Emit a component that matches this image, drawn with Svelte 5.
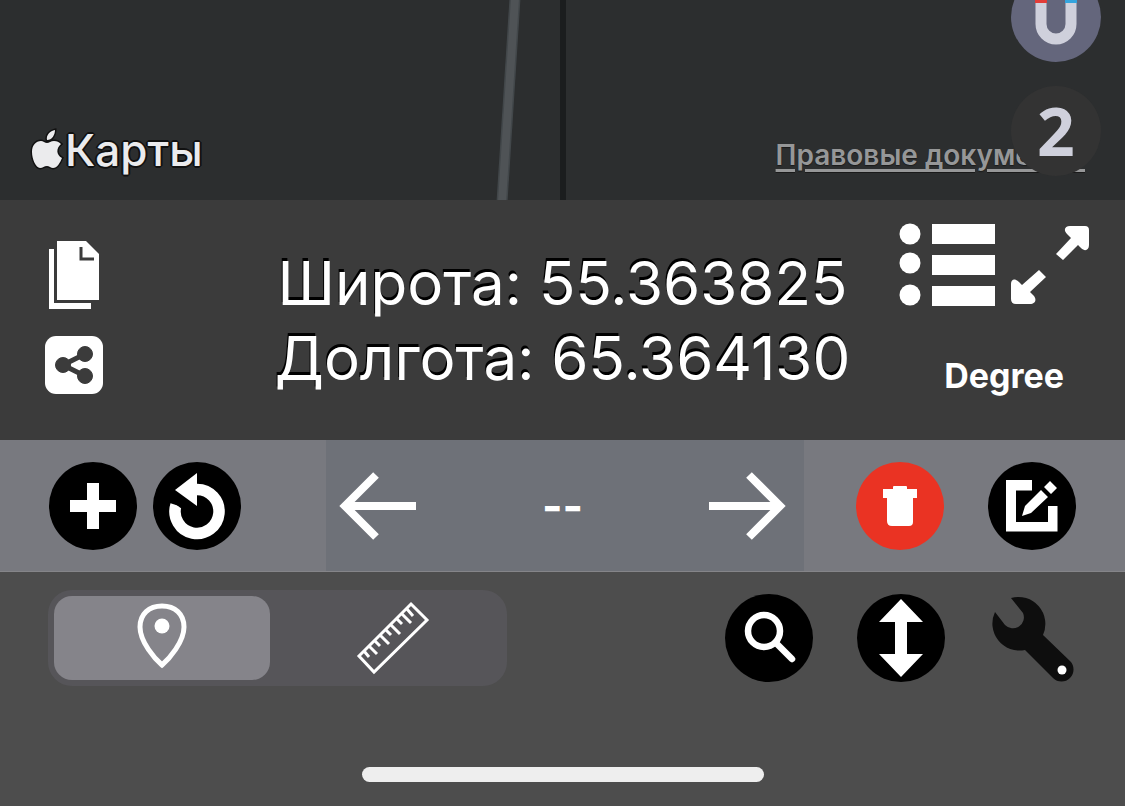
<script>
  let latitude = $state( 55.363825 );
  let longitude = $state( 65.36413 );
  let mode = $state( 'point' );
  let selected = $state( null );

  let label = $derived( selected === null ? '--' : selected );
</script>

<main>
  <section class="map">
    <svg class="roads" viewBox="0 0 1125 200" preserveAspectRatio="xMidYMax slice" aria-hidden="true">
      <path d="M515 -2 L502 202" stroke="#42474a" stroke-width="11" />
      <path d="M515 -2 L502 202" stroke="#4f5356" stroke-width="8" />
      <path d="M563 0 V200" stroke="#1b1d1e" stroke-width="6" />
    </svg>
    <p class="brand">
      <svg width="33" height="42" viewBox="0 0 33 42" aria-hidden="true">
        <path d="M17 11 C16 6 20 2 25 1 C25 6 22 11 17 11 Z M2 23 C2 16 6 12 11 12 C13 12 15 14 17 14 C19 14 21 12 24 12 C27 12 29 13 31 15 C26 19 26 26 32 29 C30 34 27 39 23 39 C21 39 19 37 17 37 C14 37 13 39 10 39 C6 39 2 30 2 23 Z" />
      </svg>
      <span>Карты</span>
    </p>
    <a class="legal" href="#legal">Правовые документы</a>
    <div class="floating">
      <button aria-label="Magnet">
        <svg width="90" height="90" viewBox="0 0 90 90">
          <path d="M30 24 V52 a15 15 0 0 0 30 0 V24" fill="none" stroke="#cfd0dc" stroke-width="11" />
          <path d="M24 18 h12 v13 h-12 z" fill="#e23c38" />
          <path d="M54 18 h12 v13 h-12 z" fill="#35a4dd" />
        </svg>
      </button>
      <button class="count">2</button>
    </div>
  </section>

  <section class="position">
    <div class="share">
      <button aria-label="Copy">
        <svg width="60" height="70" viewBox="0 0 60 70" fill="#fff">
          <path d="M5 9 h5 v54 h37 v6 h-42 z" />
          <path d="M13 1 h29 l13 13 v46 h-42 z" />
          <path d="M37 7 v12 h13" fill="none" stroke="#3b3b3b" stroke-width="3" />
        </svg>
      </button>
      <button aria-label="Share">
        <svg width="60" height="60" viewBox="0 0 60 60">
          <rect x="1" y="1" width="58" height="58" rx="11" fill="#fff" />
          <g fill="#3b3b3b" stroke="#3b3b3b">
            <path d="M41 19 L19 30 L41 41" fill="none" stroke-width="5" />
            <circle cx="41" cy="19" r="7.5" />
            <circle cx="19" cy="30" r="7.5" />
            <circle cx="41" cy="41" r="7.5" />
          </g>
        </svg>
      </button>
    </div>
    <div class="coordinates">
      <p>Широта: {latitude.toFixed( 6 )}</p>
      <p>Долгота: {longitude.toFixed( 6 )}</p>
    </div>
    <div class="format">
      <div class="icons">
        <button aria-label="List">
          <svg width="98" height="84" viewBox="0 0 98 84" fill="#fff">
            <circle cx="12" cy="12" r="10.5" />
            <circle cx="12" cy="41" r="10.5" />
            <circle cx="12" cy="73" r="10.5" />
            <path d="M34 2 h63 v20 h-63 z M34 33 h63 v20 h-63 z M34 64 h63 v20 h-63 z" />
          </svg>
        </button>
        <button aria-label="Expand">
          <svg width="80" height="80" viewBox="0 0 80 80" fill="#fff">
            <path d="M46 30 L61 14 L57 10 C53 6 55 2 60 2 H75 Q79 2 79 6 V21 C79 26 75 28 71 24 L68 21 L53 36 Z" />
            <path d="M29 46 L36 53 L20 68 L24 72 C27 76 25 80 20 80 H6 Q1 80 1 75 V60 C1 55 5 54 9 58 L12 61 Z" />
          </svg>
        </button>
      </div>
      <button class="unit">Degree</button>
    </div>
  </section>

  <section class="points">
    <div class="group left">
      <button class="round" aria-label="Add">
        <svg width="88" height="88" viewBox="0 0 88 88" fill="#fff">
          <path d="M38 21 h12 v17 h17 v12 h-17 v17 h-12 v-17 h-17 v-12 h17 z" />
        </svg>
      </button>
      <button class="round" aria-label="Undo">
        <svg width="88" height="88" viewBox="0 0 88 88">
          <path d="M44 27.500 A22 22 0 1 1 23 43" fill="none" stroke="#fff" stroke-width="11.500" />
          <path d="M44 11 V44 L22 28 Z" fill="#fff" />
          <path d="M17 38 L29 47 L31 43 L19 32 Z" fill="#000" />
        </svg>
      </button>
    </div>
    <div class="pager">
      <button aria-label="Previous">
        <svg width="78" height="68" viewBox="0 0 78 68" fill="none" stroke="#fff" stroke-width="8">
          <path d="M77 34 H7 M37 3 L6 34 L37 65" />
        </svg>
      </button>
      <output>{label}</output>
      <button aria-label="Next">
        <svg width="78" height="68" viewBox="0 0 78 68" fill="none" stroke="#fff" stroke-width="8">
          <path d="M1 34 H71 M41 3 L72 34 L41 65" />
        </svg>
      </button>
    </div>
    <div class="group right">
      <button class="round delete" aria-label="Delete">
        <svg width="88" height="88" viewBox="0 0 88 88" fill="#fff">
          <path d="M27 27 h10 v-2 q0 -1 1 -1 h12 q1 0 1 1 v2 h10 v9 h-4 v24 q0 4 -4 4 h-17 q-5 0 -5 -5 v-23 h-4 z" />
        </svg>
      </button>
      <button class="round" aria-label="Edit">
        <svg width="88" height="88" viewBox="0 0 88 88" fill="#fff">
          <path d="M44 18 V28.500 H28 V60 H60 V44 H69.500 V69.500 H18 V18 Z" />
          <path d="M56 25 L62 19 L69 26 L63 32 Z M53 28 L60 35 L43 51 L34 54 L37 44 Z" />
        </svg>
      </button>
    </div>
  </section>

  <footer>
    <div class="tools">
      <div class="segmented" role="radiogroup" aria-label="Mode">
        <label class:active={mode === 'point'}>
          <input type="radio" name="mode" value="point" aria-label="Point" bind:group={mode} />
          <svg width="72" height="84" viewBox="0 0 72 84">
            <path d="M36 69 C29 63 14 46 14 31 C14 18 23 10 36 10 C49 10 58 18 58 31 C58 46 43 63 36 69 Z" fill="none" stroke="#fff" stroke-width="5" />
            <circle cx="36" cy="30" r="7.500" fill="#fff" />
          </svg>
        </label>
        <label class:active={mode === 'ruler'}>
          <input type="radio" name="mode" value="ruler" aria-label="Ruler" bind:group={mode} />
          <svg width="76" height="84" viewBox="0 0 76 84" fill="none" stroke="#fff">
            <path d="M56 8 L72 24 L19 76 L4 60 Z" stroke-width="3" />
            <path d="M9 55 l5 6 M14 50 l8 8 M20 45 l5 5 M25 39 l9 9 M31 34 l5 5 M36 29 l9 9 M42 23 l5 5 M47 18 l9 9 M52 13 l6 7" stroke-width="3" />
          </svg>
        </label>
      </div>
      <div class="actions">
        <button class="round" aria-label="Search">
          <svg width="88" height="88" viewBox="0 0 88 88" fill="none" stroke="#fff">
            <circle cx="39" cy="37" r="16" stroke-width="6.500" />
            <path d="M51 49 L67 65" stroke-width="6.500" stroke-linecap="round" />
          </svg>
        </button>
        <button class="round" aria-label="Height">
          <svg width="88" height="88" viewBox="0 0 88 88" fill="#fff">
            <path d="M44 5 L66 28 H50 V60 H66 L44 83 L22 60 H38 V28 H22 Z" />
          </svg>
        </button>
        <button aria-label="Settings">
          <svg width="88" height="88" viewBox="0 0 88 88">
            <path d="M22 4 A27 27 0 0 1 54 41 L81 67 A12 12 0 0 1 64 84 L36 56 A27 27 0 0 1 6 18 L16 31 A11 11 0 0 0 34 19 Z" fill="#0e0e0e" />
            <circle cx="73" cy="76" r="4.500" fill="#fff" />
          </svg>
        </button>
      </div>
    </div>
    <div class="home"></div>
  </footer>
</main>

<style>
  :global(body) {
    background: #4d4d4d;
    margin: 0;
  }

  main {
    color: #fff;
    display: flex;
    flex-direction: column;
    font-family: Inter, 'Liberation Sans', sans-serif;
    min-height: 100vh;
  }

  p {
    margin: 0;
  }

  svg {
    display: block;
  }

  button {
    background: none;
    border: 0;
    color: inherit;
    cursor: pointer;
    font: inherit;
    padding: 0;
  }

  .map {
    align-items: flex-end;
    background: #2c2e2f;
    box-sizing: border-box;
    display: flex;
    height: 200px;
    justify-content: space-between;
    overflow: hidden;
    padding: 0 40px 24px 30px;
    position: relative;
  }

  .roads {
    height: 100%;
    left: 0;
    position: absolute;
    top: 0;
    width: 100%;
  }

  .brand {
    align-items: center;
    color: #ebebed;
    display: flex;
    font-size: 44px;
    font-weight: 500;
    gap: 2px;
    line-height: 52px;
    position: relative;
    text-shadow: -1px -1px 0 #111, 1px -1px 0 #111, -1px 1px 0 #111, 1px 1px 0 #111, 0 2px 0 #111, 0 -2px 0 #111, 2px 0 0 #111, -2px 0 0 #111;
  }

  .brand svg {
    fill: #ebebed;
    overflow: visible;
    paint-order: stroke;
    stroke: #111;
    stroke-width: 3px;
  }

  .legal {
    color: #969798;
    font-size: 28px;
    font-weight: 600;
    line-height: 42px;
    position: relative;
    text-decoration-thickness: 3px;
    text-underline-offset: 4px;
    text-shadow: 0 1px 1px #1a1a1a;
  }

  .floating {
    bottom: 24px;
    display: flex;
    flex-direction: column;
    gap: 24px;
    position: absolute;
    right: 24px;
  }

  .floating button {
    background: #64667c;
    border-radius: 50%;
    height: 90px;
    width: 90px;
  }

  .floating .count {
    background: #333;
    color: #cfd0dc;
    font-family: 'Noto Sans', sans-serif;
    font-size: 66px;
    font-weight: 700;
    line-height: 88px;
    padding-bottom: 2px;
  }

  .position {
    background: #3b3b3b;
    box-sizing: border-box;
    display: grid;
    grid-template-columns: 1fr auto 1fr;
    min-height: 240px;
    padding: 22px 35px 32px;
  }

  .share {
    display: flex;
    flex-direction: column;
    gap: 25px;
    padding: 18px 0 0 9px;
  }

  .share button {
    width: 60px;
  }

  .coordinates {
    font-size: 60px;
    line-height: 75px;
    padding-top: 24px;
    text-align: center;
    text-shadow: -1px -3px 0 #000;
    white-space: nowrap;
  }

  .format {
    align-items: flex-end;
    display: flex;
    flex-direction: column;
    justify-content: space-between;
  }

  .icons {
    display: flex;
    gap: 14px;
  }

  .unit {
    font-size: 34px;
    font-weight: 700;
    line-height: 40px;
    margin-bottom: 12px;
    margin-right: 26px;
  }

  .points {
    background: #78797f;
    border-bottom: 1px solid #858589;
    display: flex;
  }

  .group {
    align-items: center;
    display: flex;
    padding: 22px 49px 21px;
  }

  .left {
    gap: 16px;
    padding-right: 85px;
  }

  .right {
    gap: 44px;
    padding-left: 52px;
  }

  .round {
    background: #000;
    border-radius: 50%;
    height: 88px;
    width: 88px;
  }

  .delete {
    background: #ea3323;
  }

  .pager {
    align-items: center;
    background: #6e7178;
    display: flex;
    flex: 1;
    justify-content: space-between;
    padding: 0 18px 0 13px;
  }

  output {
    font-size: 44px;
    font-weight: 700;
    line-height: 48px;
  }

  footer {
    align-items: center;
    background: #4d4d4d;
    display: flex;
    flex: 1;
    flex-direction: column;
    justify-content: space-between;
    padding-bottom: 24px;
  }

  .tools {
    align-items: center;
    box-sizing: border-box;
    display: flex;
    justify-content: space-between;
    padding: 18px 48px 0;
    width: 100%;
  }

  .segmented {
    background: #565559;
    border-radius: 24px;
    display: flex;
    gap: 15px;
    padding: 6px;
  }

  .segmented label {
    border-radius: 18px;
    cursor: pointer;
    display: flex;
    justify-content: center;
    position: relative;
    width: 216px;
  }

  .segmented .active {
    background: #85848a;
  }

  .segmented input {
    appearance: none;
    inset: 0;
    margin: 0;
    position: absolute;
  }

  .actions {
    display: flex;
    gap: 44px;
  }

  .home {
    background: #eee;
    border-radius: 8px;
    height: 15px;
    max-width: 80%;
    width: 402px;
  }
</style>
